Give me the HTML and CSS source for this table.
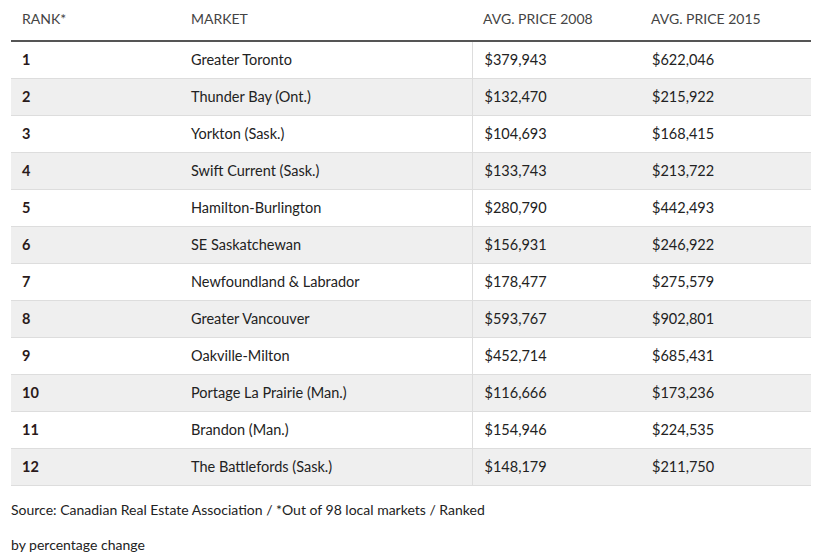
FILE: index.html
```html
<!DOCTYPE html>
<html>
<head>
<meta charset="utf-8">
<link rel="stylesheet" href="styles.css">
</head>
<body>
<div class="page">
  <table class="prices">
    <thead>
      <tr>
        <th class="c-rank">RANK*</th>
        <th class="c-market">MARKET</th>
        <th class="c-p1">AVG. PRICE 2008</th>
        <th class="c-p2">AVG. PRICE 2015</th>
      </tr>
    </thead>
    <tbody>
      <tr><td class="rank">1</td><td class="name">Greater Toronto</td><td class="num sep">$379,943</td><td class="num">$622,046</td></tr>
      <tr><td class="rank">2</td><td class="name">Thunder Bay (Ont.)</td><td class="num sep">$132,470</td><td class="num">$215,922</td></tr>
      <tr><td class="rank">3</td><td class="name">Yorkton (Sask.)</td><td class="num sep">$104,693</td><td class="num">$168,415</td></tr>
      <tr><td class="rank">4</td><td class="name">Swift Current (Sask.)</td><td class="num sep">$133,743</td><td class="num">$213,722</td></tr>
      <tr><td class="rank">5</td><td class="name">Hamilton-Burlington</td><td class="num sep">$280,790</td><td class="num">$442,493</td></tr>
      <tr><td class="rank">6</td><td class="name">SE Saskatchewan</td><td class="num sep">$156,931</td><td class="num">$246,922</td></tr>
      <tr><td class="rank">7</td><td class="name">Newfoundland &amp; Labrador</td><td class="num sep">$178,477</td><td class="num">$275,579</td></tr>
      <tr><td class="rank">8</td><td class="name">Greater Vancouver</td><td class="num sep">$593,767</td><td class="num">$902,801</td></tr>
      <tr><td class="rank">9</td><td class="name">Oakville-Milton</td><td class="num sep">$452,714</td><td class="num">$685,431</td></tr>
      <tr><td class="rank">10</td><td class="name">Portage La Prairie (Man.)</td><td class="num sep">$116,666</td><td class="num">$173,236</td></tr>
      <tr><td class="rank">11</td><td class="name">Brandon (Man.)</td><td class="num sep">$154,946</td><td class="num">$224,535</td></tr>
      <tr><td class="rank">12</td><td class="name">The Battlefords (Sask.)</td><td class="num sep">$148,179</td><td class="num">$211,750</td></tr>
    </tbody>
  </table>
  <p class="source">Source: Canadian Real Estate Association / *Out of 98 local markets / Ranked<br>by percentage change</p>
</div>
</body>
</html>
```
FILE: styles.css
```css
html, body {
  margin: 0;
  padding: 0;
  background: #ffffff;
}
.page {
  padding: 0 10px 0 11px;
  font-family: Lato, "Noto Sans", sans-serif;
  font-size: 14.5px;
  color: #222222;
}
.prices {
  width: 800px;
  border-collapse: collapse;
  table-layout: fixed;
}
.prices th {
  height: 37px;
  padding: 0 0 3px 11px;
  text-align: left;
  font-size: 14px;
  font-weight: normal;
  color: #444444;
  border-bottom: 2px solid #555555;
  vertical-align: middle;
}
.c-rank { width: 158px; }
.c-market { width: 281px; }
.c-p1 { width: 157px; }
.c-p2 { width: 160px; }
.prices td {
  height: 35px;
  padding: 0 0 1px 11px;
  border-bottom: 1px solid #dddddd;
  vertical-align: middle;
}
.prices td.num {
  padding-left: 12px;
}
.prices tbody tr:nth-child(even) td {
  background: #efefef;
}
.prices td.sep {
  border-left: 1px solid #dddddd;
}
.prices td.rank {
  font-weight: bold;
  color: #2a1a1a;
}
.source {
  margin: 6px 0 0 0;
  font-size: 14px;
  line-height: 35px;
  color: #222222;
}
```
